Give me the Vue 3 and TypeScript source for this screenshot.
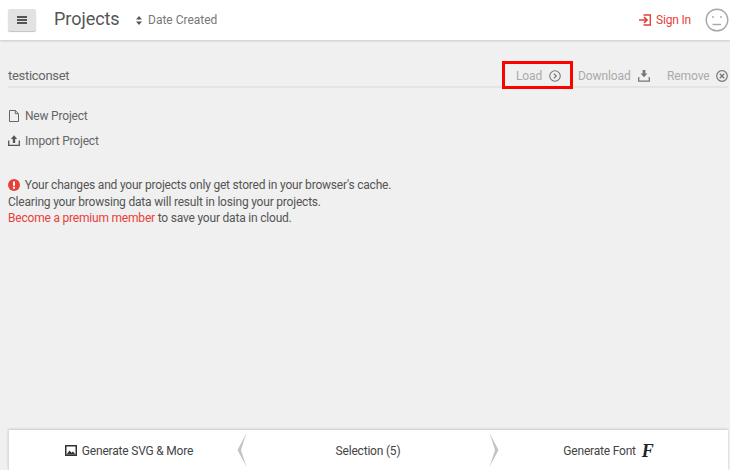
<script setup lang="ts">
const messageLines = ["Clearing your browsing data will result in losing your projects."];
</script>

<template>
  <div class="page">
    <header class="topbar">
      <button class="menu-btn" aria-label="Menu">
        <svg width="10" height="8" viewBox="0 0 10 8"><path d="M0 0h10v2H0zM0 3h10v2H0zM0 6h10v2H0z" fill="#555" /></svg>
      </button>
      <h1 class="title">Projects</h1>
      <div class="sort">
        <svg width="6" height="9" viewBox="0 0 6 9"><path d="M3 0l3 3.4H0zM3 9L0 5.6h6z" fill="#555" /></svg>
        <span>Date Created</span>
      </div>
      <div class="spacer"></div>
      <a class="signin">
        <svg width="12" height="12" viewBox="0 0 12 12" fill="none" stroke="#e8403a" stroke-width="1.4">
          <path d="M4.5 1h6.800v10H4.500" />
          <path d="M0 6h7M5 3.200L8 6 5 8.800" stroke-width="1.700" />
        </svg>
        <span>Sign In</span>
      </a>
      <svg class="avatar" width="24" height="24" viewBox="0 0 24 24" fill="none" stroke="#a8a8a8" stroke-width="1.4">
        <circle cx="12" cy="12" r="10.800" />
        <path d="M7.500 16.500h8.500" />
        <circle cx="8" cy="9" r=".9" fill="#a8a8a8" stroke="none" />
        <circle cx="16" cy="9" r=".9" fill="#a8a8a8" stroke="none" />
      </svg>
    </header>

    <main class="content">
      <div class="project-row">
        <span class="project-name">testiconset</span>
        <div class="actions">
          <div class="action load">
            <span class="label">Load</span>
            <svg width="12" height="12" viewBox="0 0 13 13" fill="none" stroke="#777" stroke-width="1.200">
              <circle cx="6.500" cy="6.500" r="5.700" />
              <path d="M5.300 3.900l2.600 2.600-2.600 2.600" stroke-width="1.400" />
            </svg>
            <div class="highlight"></div>
          </div>
          <div class="action download">
            <span class="label">Download</span>
            <svg width="12" height="12" viewBox="0 0 12 12" fill="none" stroke="#777">
              <path d="M.7 7v4.200h10.600V7" stroke-width="1.300" />
              <path d="M4.600 0h2.800v3.500h2L6 7.200 2.600 3.500h2z" fill="#777" stroke="none" />
            </svg>
          </div>
          <div class="action remove">
            <span class="label">Remove</span>
            <svg width="12" height="12" viewBox="0 0 12 12" fill="none" stroke="#777" stroke-width="1.200">
              <circle cx="6" cy="6" r="5.300" />
              <path d="M3.800 3.800l4.400 4.400M8.200 3.800L3.800 8.200" stroke-width="1.400" />
            </svg>
          </div>
        </div>
      </div>

      <ul class="links">
        <li>
          <svg width="12" height="12" viewBox="0 0 12 12" fill="none" stroke="#666" stroke-width="1">
            <path d="M1.500.500h5.800l3.200 3.200v7.800h-9zM7.300.500v3.200h3.200" />
          </svg>
          <span>New Project</span>
        </li>
        <li>
          <svg width="12" height="11" viewBox="0 0 12 11" fill="none" stroke="#555">
            <path d="M.7 5.500v4.800h10.600V5.500" stroke-width="1.300" />
            <path d="M4.800 8V4H2.800L6 .2 9.200 4h-2v4z" fill="#555" stroke="none" />
          </svg>
          <span>Import Project</span>
        </li>
      </ul>

      <div class="notice">
        <p>
          <svg class="alert" width="12" height="12" viewBox="0 0 12 12">
            <circle cx="6" cy="6" r="6" fill="#e8403a" />
            <path d="M5 2.400h2v4.400H5zM5 7.800h2v1.900H5z" fill="#fff" />
          </svg>
          Your changes and your projects only get stored in your browser's cache.
        </p>
        <p v-for="line in messageLines" :key="line">{{ line }}</p>
        <p><a class="premium">Become a premium member</a> to save your data in cloud.</p>
      </div>
    </main>

    <footer class="bottombar">
      <div class="bottom-cell left">
        <svg width="12" height="11" viewBox="0 0 12 11">
          <path fill-rule="evenodd" d="M0 0h12v11H0zM1.500 1.500v8h9v-8z" fill="#333" />
          <path d="M1.500 9.500l3-4 2 2.300 1.500-1.300 2.500 3z" fill="#333" />
        </svg>
        <span>Generate SVG &amp; More</span>
      </div>
      <svg class="chevron" width="11" height="34" viewBox="0 0 10 34">
        <path d="M9 0L0 17l9 17-5.500-17z" fill="#c4c4c4" />
      </svg>
      <div class="bottom-cell middle"><span>Selection (5)</span></div>
      <svg class="chevron" width="11" height="34" viewBox="0 0 10 34">
        <path d="M1 0l9 17-9 17 5.500-17z" fill="#c4c4c4" />
      </svg>
      <div class="bottom-cell right">
        <span>Generate Font</span>
        <span class="font-mark">F</span>
      </div>
    </footer>
  </div>
</template>

<style>
html, body { margin: 0; padding: 0; }
</style>

<style scoped>
.page {
  width: 730px;
  height: 470px;
  display: flex;
  flex-direction: column;
  background: #f0f0f0;
  font-family: Roboto, "Noto Sans", sans-serif;
  color: #555;
  overflow: hidden;
}
.topbar {
  height: 40px;
  flex: none;
  display: flex;
  align-items: center;
  background: #fff;
  box-shadow: 0 1px 2px rgba(0, 0, 0, 0.16);
  padding: 0 1px 0 8px;
  box-sizing: border-box;
}
.menu-btn {
  width: 28px;
  height: 22px;
  margin-top: -1px;
  border: 0;
  padding: 0;
  border-radius: 2px;
  background: #e2e2e2;
  box-shadow: 0 1px 1px rgba(0, 0, 0, 0.25);
  display: flex;
  align-items: center;
  justify-content: center;
}
.title {
  margin: -2px 0 0 18px;
  font-size: 18px;
  font-weight: 400;
  color: #555;
  line-height: 24px;
  width: 64px;
  letter-spacing: -0.05px;
}
.sort {
  margin: 0 0 0 18px;
  display: flex;
  align-items: center;
  gap: 6px;
  font-size: 12px;
  color: #777;
}
.spacer { flex: 1; }
.signin {
  display: flex;
  align-items: center;
  gap: 5px;
  color: #e8403a;
  font-size: 12px;
  letter-spacing: -0.2px;
  margin: -1px 14px 0 0;
}
.content {
  flex: 1;
  padding: 0 2px 0 8px;
  min-height: 0;
}
.project-row {
  margin-top: 22px;
  height: 24px;
  display: flex;
  align-items: center;
  justify-content: space-between;
  border-bottom: 2px solid #e4e4e4;
}
.project-name { font-size: 13px; color: #666; margin-top: 2px; letter-spacing: -0.3px; }
.actions { display: flex; align-items: center; margin-top: 4px; }
.action {
  display: flex;
  align-items: center;
  font-size: 12px;
  color: #aaa;
  position: relative;
}
.label { display: block; letter-spacing: -0.1px; }
.load .label { width: 24px; }
.download .label { width: 52px; }
.remove .label { width: 41px; }
.load { gap: 9px; }
.download { gap: 8px; margin-left: 17px; }
.remove { gap: 8px; margin-left: 17px; }
.highlight {
  position: absolute;
  left: -14px;
  top: -8px;
  width: 71px;
  height: 28px;
  box-sizing: border-box;
  border: 3px solid #f00;
}
.links {
  list-style: none;
  margin: 15px 0 0;
  padding: 0;
}
.links li {
  height: 25px;
  display: flex;
  align-items: center;
  font-size: 12px;
  color: #666;
  letter-spacing: -0.2px;
}
.links svg { margin-right: 5px; }
.notice {
  margin-top: 24px;
  font-size: 12px;
  line-height: 16.500px;
  letter-spacing: -0.2px;
  color: #555;
}
.notice p { margin: 0; }
.alert { vertical-align: -2px; margin-right: 2px; }
.premium { color: #e8403a; }
.bottombar {
  height: 40px;
  flex: none;
  margin: 0 2px 0 8px;
  display: flex;
  align-items: center;
  background: #fff;
  border-left: 1px solid #ddd;
  box-shadow: 0 -1px 2px rgba(0, 0, 0, 0.16);
}
.bottom-cell {
  height: 100%;
  display: flex;
  align-items: center;
  justify-content: center;
  font-size: 12px;
  color: #444;
  gap: 5px;
  letter-spacing: -0.2px;
  padding-top: 1px;
  box-sizing: border-box;
}
.left { width: 228px; padding-left: 12px; }
.middle { flex: 1; }
.right { width: 229px; padding-right: 10px; gap: 6px; }
.chevron { flex: none; }
.font-mark {
  font-family: "Liberation Serif", serif;
  font-style: italic;
  font-weight: 700;
  font-size: 18px;
  line-height: 18px;
  color: #222;
}
</style>
